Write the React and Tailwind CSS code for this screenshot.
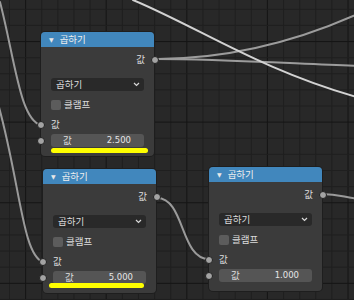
import React from "react";

const FONT = { fontFamily: '"DejaVu Sans", "Noto Sans CJK KR", sans-serif' };

function Socket({ className }) {
  return (
    <div
      className={
        "absolute w-[8px] h-[8px] rounded-full bg-[#a3a3a3] border border-[#202020] " +
        className
      }
    />
  );
}

function MathNode({ pos, value }) {
  return (
    <div
      className={
        "absolute w-[113px] h-[124px] rounded-[4px] bg-[#3b3b3b] shadow-[0_0_0_1px_#1e1e1e] flex flex-col " +
        pos
      }
    >
      <div className="h-[15px] rounded-t-[4px] bg-[#4187bd] flex items-center pl-[8px] gap-[6px]">
        <span className="text-[6px] text-[#e8e8e8] leading-none">▼</span>
        <span className="text-[9.5px] text-[#eeeeee] leading-none">곱하기</span>
      </div>
      <div className="relative mt-[6px] h-[14px] flex items-center justify-end pr-[9px]">
        <span className="text-[9.5px] text-[#e0e0e0] leading-none">값</span>
        <Socket className="right-[-5px] top-[3px]" />
      </div>
      <div className="mt-[11px] mx-[10px] h-[13px] rounded-[3px] bg-[#292929] flex items-center justify-between pl-[5px] pr-[4px]">
        <span className="text-[9.5px] text-[#dcdcdc] leading-none">곱하기</span>
        <svg width="7" height="5" viewBox="0 0 7 5">
          <path d="M1 1 L3.5 3.5 L6 1" stroke="#d8d8d8" strokeWidth="1.2" fill="none" />
        </svg>
      </div>
      <div className="mt-[9px] h-[10px] flex items-center pl-[10px] gap-[3px]">
        <div className="w-[10px] h-[10px] rounded-[2px] bg-[#5c5c5c]" />
        <span className="text-[9.5px] text-[#dcdcdc] leading-none">클램프</span>
      </div>
      <div className="relative mt-[8px] h-[14px] flex items-center pl-[10px]">
        <span className="text-[9.5px] text-[#e0e0e0] leading-none">값</span>
        <Socket className="left-[-4px] top-[3px]" />
      </div>
      <div className="relative mt-[2px] mx-[10px] h-[13px] rounded-[3px] bg-[#555555] flex items-center justify-between pl-[12px] pr-[13px]">
        <span className="text-[9.5px] text-[#e0e0e0] leading-none">값</span>
        <span className="text-[8.5px] text-[#e6e6e6] leading-none">{value}</span>
        <Socket className="left-[-14px] top-[2.5px]" />
      </div>
    </div>
  );
}

export default function App() {
  const minorV = [];
  const minorH = [];
  for (let i = 0; i < 23; i++) {
    const x = 9.5 + 16.12 * i;
    minorV.push(x);
    const y = 9.3 + 16.12 * i;
    minorH.push(y);
  }
  return (
    <div className="relative w-[354px] h-[300px] overflow-hidden bg-[#282828]" style={FONT}>
      <svg className="absolute inset-0" width="354" height="300">
        {minorV.map((x, i) => (
          <line
            key={"v" + i}
            x1={x}
            x2={x}
            y1="0"
            y2="300"
            stroke={(i - 1) % 5 === 0 ? "#151515" : "#1f1f1f"}
            strokeWidth="1"
          />
        ))}
        {minorH.map((y, i) => (
          <line
            key={"h" + i}
            y1={y}
            y2={y}
            x1="0"
            x2="354"
            stroke={(i - 2) % 5 === 0 ? "#151515" : "#1f1f1f"}
            strokeWidth="1"
          />
        ))}
        <g fill="none" strokeLinecap="round">
          <path d="M0 2 C15 60, 20 120, 41 125" stroke="#9a9a9a" strokeWidth="2" />
          <path d="M-3 100 C20 180, 22 255, 43 262" stroke="#9a9a9a" strokeWidth="2" />
          <path d="M156 59 C220 59, 300 64, 360 66" stroke="#9c9c9c" strokeWidth="2" />
          <path d="M156 59 C230 59, 300 40, 360 13" stroke="#9c9c9c" strokeWidth="2" />
          <path d="M133 0 C200 28, 260 70, 360 98" stroke="#d2d2d2" strokeWidth="2" />
          <path d="M157 198 C185 198, 180 259, 209 259" stroke="#9a9a9a" strokeWidth="2" />
          <path d="M322 194 C340 194, 345 198, 360 199" stroke="#9a9a9a" strokeWidth="2" />
        </g>
      </svg>

      <MathNode pos="left-[41px] top-[32px]" value="2.500" />
      <MathNode pos="left-[43px] top-[169px]" value="5.000" />
      <MathNode pos="left-[209px] top-[167px]" value="1.000" />

      <div className="absolute left-[51px] top-[148px] w-[97px] h-[5px] rounded-full bg-[#ffff00]" />
      <div className="absolute left-[49px] top-[283px] w-[95px] h-[5px] rounded-full bg-[#ffff00]" />
    </div>
  );
}
